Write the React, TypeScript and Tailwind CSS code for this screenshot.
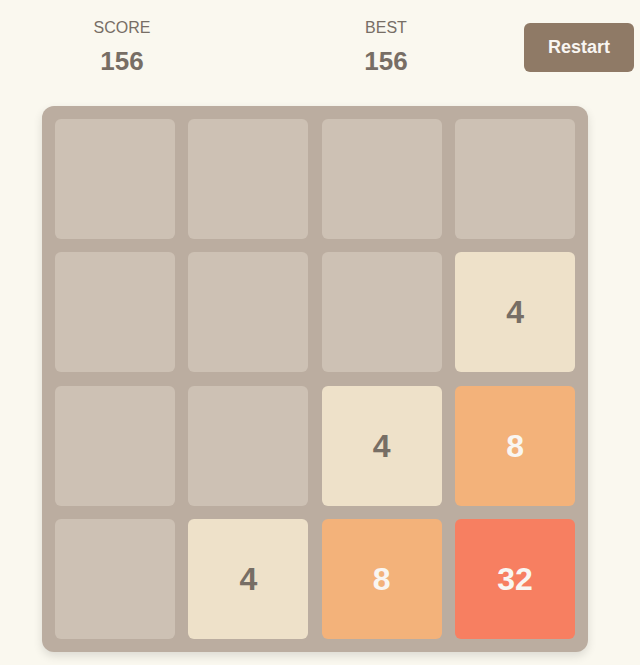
import React from 'react';

const board: number[][] = [
  [0, 0, 0, 0],
  [0, 0, 0, 4],
  [0, 0, 4, 8],
  [0, 4, 8, 32],
];

const tileClass = (v: number) => {
  switch (v) {
    case 2:
      return 'bg-[#eee4da] text-[#776e65]';
    case 4:
      return 'bg-[#eee1c9] text-[#776e65]';
    case 8:
      return 'bg-[#f3b27a] text-[#f9f6f2]';
    case 16:
      return 'bg-[#f69664] text-[#f9f6f2]';
    case 32:
      return 'bg-[#f77f61] text-[#f9f6f2]';
    default:
      return 'bg-[#cdc1b4]';
  }
};

const Stat: React.FC<{ label: string; value: number; className?: string }> = ({ label, value, className }) => (
  <div className={`w-[120px] flex flex-col items-center ${className ?? ''}`}>
    <div className="text-[16px] leading-[16px] text-[#776e65]">{label}</div>
    <div className="mt-[12px] text-[26px] leading-[26px] font-bold text-[#776e65]">{value}</div>
  </div>
);

export default function App() {
  return (
    <div className="min-h-screen bg-[#faf8ef] font-['Liberation_Sans',Arial,sans-serif]">
      {/* Score bar */}
      <header className="h-[106px] pt-[20px] flex items-start">
        <Stat label="SCORE" value={156} className="ml-[62px]" />
        <Stat label="BEST" value={156} className="ml-[144px]" />
        <button className="ml-[78px] mt-[3px] w-[110px] h-[49px] rounded-md bg-[#8f7a66] text-[#f9f6f2] text-[18px] font-bold">
          Restart
        </button>
      </header>

      {/* Board */}
      <div className="ml-[42px] w-[546px] h-[546px] rounded-xl bg-[#bbada0] p-[13px] grid grid-cols-4 grid-rows-4 gap-[13.5px] shadow-[0_4px_10px_rgba(0,0,0,0.12)]">
        {board.flat().map((v, i) => (
          <div
            key={i}
            className={`rounded-md flex items-center justify-center text-[32px] font-bold ${tileClass(v)}`}
          >
            {v > 0 ? v : null}
          </div>
        ))}
      </div>
    </div>
  );
}
